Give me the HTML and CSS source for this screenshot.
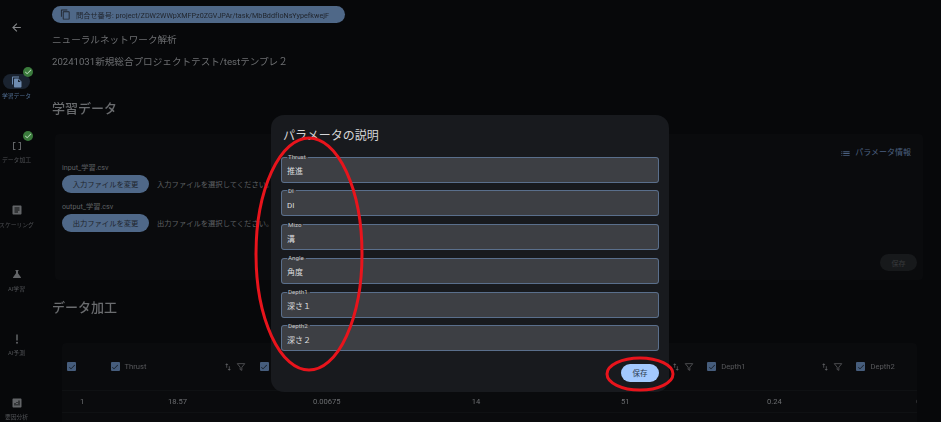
FILE: index.html
```html
<!DOCTYPE html>
<html lang="ja">
<head>
<meta charset="utf-8">
<title>ニューラルネットワーク解析</title>
<link rel="stylesheet" href="styles.css">
</head>
<body>
<svg class="defs" aria-hidden="true">
  <symbol id="i-copy" viewBox="0 0 24 24"><path d="M16 1H4c-1.1 0-2 .9-2 2v14h2V3h12V1zm3 4H8c-1.1 0-2 .9-2 2v14c0 1.1.9 2 2 2h11c1.1 0 2-.9 2-2V7c0-1.1-.9-2-2-2zm0 16H8V7h11v14z"/></symbol>
  <symbol id="i-back" viewBox="0 0 24 24"><path d="M20 11H7.83l5.59-5.59L12 4l-8 8 8 8 1.41-1.41L7.83 13H20v-2z"/></symbol>
  <symbol id="i-files" viewBox="0 0 24 24"><path d="M16 1H4c-1.1 0-2 .9-2 2v14h2V3h12V1zm-1 4 6 6v10c0 1.1-.9 2-2 2H7.99C6.89 23 6 22.1 6 21l.01-14c0-1.1.89-2 1.99-2h7zm-1 7h5.5L14 6.5V12z"/></symbol>
  <symbol id="i-array" viewBox="0 0 24 24"><path d="M15 4v2h3v12h-3v2h5V4zM4 20h5v-2H6V6h3V4H4z"/></symbol>
  <symbol id="i-article" viewBox="0 0 24 24"><path d="M19 3H5c-1.1 0-2 .9-2 2v14c0 1.1.9 2 2 2h14c1.1 0 2-.9 2-2V5c0-1.1-.9-2-2-2zm-5 14H7v-2h7v2zm3-4H7v-2h10v2zm0-4H7V7h10v2z"/></symbol>
  <symbol id="i-flask" viewBox="0 0 24 24"><path d="M19.8 18.4 14 10.67V6.5l1.35-1.69c.26-.33.03-.81-.39-.81H9.04c-.42 0-.65.48-.39.81L10 6.5v4.17L4.2 18.4c-.49.66-.02 1.6.8 1.6h14c.82 0 1.29-.94.8-1.6z"/></symbol>
  <symbol id="i-bang" viewBox="0 0 24 24"><path d="M10.5 3h3v12h-3z"/><circle cx="12" cy="19.5" r="2"/></symbol>
  <symbol id="i-chart" viewBox="0 0 24 24"><path d="M19 3H5c-1.1 0-2 .9-2 2v14c0 1.1.9 2 2 2h14c1.1 0 2-.9 2-2V5c0-1.1-.9-2-2-2zM9 17H7v-5h2v5zm4 0h-2v-3h2v3zm0-5h-2v-2h2v2zm4 5h-2V7h2v10z"/></symbol>
  <symbol id="i-list" viewBox="0 0 24 24"><path d="M3 13h2v-2H3v2zm0 4h2v-2H3v2zm0-8h2V7H3v2zm4 4h14v-2H7v2zm0 4h14v-2H7v2zM7 7v2h14V7H7z"/></symbol>
  <symbol id="i-check" viewBox="0 0 24 24"><path d="M9 16.17 4.83 12l-1.41 1.41L9 19 21 7l-1.41-1.41z"/></symbol>
  <symbol id="i-sort" viewBox="0 0 24 24"><path d="M16 17.01V10h-2v7.01h-3L15 21l4-3.99h-3zM9 3 5 6.99h3V14h2V6.99h3L9 3z"/></symbol>
  <symbol id="i-filter" viewBox="0 0 24 24"><path d="M3 4h18l-7 8.5V20l-4-2v-5.500z" fill="none" stroke="currentColor" stroke-width="2" stroke-linejoin="round"/></symbol>
</svg>

<div class="app">
  <nav class="rail">
    <svg class="rail-back"><use href="#i-back"/></svg>
    <div class="rail-items">
      <div class="rail-item is-active">
        <span class="rail-icon"><svg><use href="#i-files"/></svg><svg class="done" viewBox="0 0 24 24"><circle cx="12" cy="12" r="12"/><path d="M10 16.200 6.300 12.500l-1.400 1.400 5.100 5.100 10-10-1.400-1.400z" transform="translate(0 -1.500)"/></svg></span>
        <span class="rail-label">学習データ</span>
      </div>
      <div class="rail-item">
        <span class="rail-icon"><svg><use href="#i-array"/></svg><svg class="done" viewBox="0 0 24 24"><circle cx="12" cy="12" r="12"/><path d="M10 16.200 6.300 12.500l-1.400 1.400 5.100 5.100 10-10-1.400-1.400z" transform="translate(0 -1.500)"/></svg></span>
        <span class="rail-label">データ加工</span>
      </div>
      <div class="rail-item">
        <span class="rail-icon"><svg><use href="#i-article"/></svg></span>
        <span class="rail-label">スケーリング</span>
      </div>
      <div class="rail-item">
        <span class="rail-icon"><svg><use href="#i-flask"/></svg></span>
        <span class="rail-label">AI学習</span>
      </div>
      <div class="rail-item">
        <span class="rail-icon"><svg><use href="#i-bang"/></svg></span>
        <span class="rail-label">AI予測</span>
      </div>
      <div class="rail-item">
        <span class="rail-icon"><svg><use href="#i-chart"/></svg></span>
        <span class="rail-label">要因分析</span>
      </div>
    </div>
  </nav>

  <main class="main">
    <div class="ticket">
      <svg><use href="#i-copy"/></svg>
      <span>問合せ番号: project/ZDW2WWpXMFPz0ZGVJPAr/task/MbBddfIoNsYypefkwejF</span>
    </div>
    <p class="crumb crumb-first">ニューラルネットワーク解析</p>
    <p class="crumb crumb-second">20241031新規総合プロジェクトテスト/testテンプレ２</p>

    <h2 class="section-title title-data">学習データ</h2>
    <section class="card upload">
      <div class="param-link"><svg><use href="#i-list"/></svg><span>パラメータ情報</span></div>
      <div class="file-label file-label-first">input_学習.csv</div>
      <div class="file-row">
        <span class="file-btn">入力ファイルを変更</span>
        <span class="file-hint">入力ファイルを選択してください。</span>
      </div>
      <div class="file-label">output_学習.csv</div>
      <div class="file-row">
        <span class="file-btn">出力ファイルを変更</span>
        <span class="file-hint">出力ファイルを選択してください。</span>
      </div>
      <div class="upload-foot"><span class="save-disabled">保存</span></div>
    </section>

    <h2 class="section-title title-process">データ加工</h2>
    <section class="card table">
      <div class="thead">
        <div class="cell-index"><span class="box"><svg><use href="#i-check"/></svg></span></div>
        <div class="th"><span class="box"><svg><use href="#i-check"/></svg></span><span class="th-name">Thrust</span><span class="th-tools"><svg><use href="#i-sort"/></svg><svg><use href="#i-filter"/></svg></span></div>
        <div class="th"><span class="box"><svg><use href="#i-check"/></svg></span><span class="th-name">DI</span><span class="th-tools"><svg><use href="#i-sort"/></svg><svg><use href="#i-filter"/></svg></span></div>
        <div class="th"><span class="box"><svg><use href="#i-check"/></svg></span><span class="th-name">Mizo</span><span class="th-tools"><svg><use href="#i-sort"/></svg><svg><use href="#i-filter"/></svg></span></div>
        <div class="th"><span class="box"><svg><use href="#i-check"/></svg></span><span class="th-name">Angle</span><span class="th-tools"><svg><use href="#i-sort"/></svg><svg><use href="#i-filter"/></svg></span></div>
        <div class="th"><span class="box"><svg><use href="#i-check"/></svg></span><span class="th-name">Depth1</span><span class="th-tools"><svg><use href="#i-sort"/></svg><svg><use href="#i-filter"/></svg></span></div>
        <div class="th"><span class="box"><svg><use href="#i-check"/></svg></span><span class="th-name">Depth2</span></div>
      </div>
      <div class="tbody">
        <div class="cell-index">1</div>
        <div>18.57</div>
        <div>0.00675</div>
        <div>14</div>
        <div>51</div>
        <div>0.24</div>
        <div>0.18</div>
      </div>
    </section>
  </main>

  <div class="dialog" role="dialog">
    <h3 class="dialog-title">パラメータの説明</h3>
    <div class="fields">
      <fieldset class="field"><legend>Thrust</legend><div>推進</div></fieldset>
      <fieldset class="field"><legend>DI</legend><div>DI</div></fieldset>
      <fieldset class="field"><legend>Mizo</legend><div>溝</div></fieldset>
      <fieldset class="field"><legend>Angle</legend><div>角度</div></fieldset>
      <fieldset class="field"><legend>Depth1</legend><div>深さ１</div></fieldset>
      <fieldset class="field"><legend>Depth2</legend><div>深さ２</div></fieldset>
    </div>
    <div class="dialog-foot"><span class="save">保存</span></div>
  </div>

  <svg class="marks" viewBox="0 0 941 422" aria-hidden="true">
    <ellipse cx="309" cy="254" rx="53" ry="116"/>
    <ellipse cx="640" cy="374" rx="33" ry="16"/>
  </svg>
</div>
</body>
</html>
```

FILE: styles.css
```css
* { box-sizing: border-box; }

html, body {
  margin: 0;
  height: 100%;
  background: #07080a;
}

body {
  font-family: Roboto, "Noto Sans CJK JP", sans-serif;
  overflow: hidden;
}

.defs { display: none; }

svg { fill: currentColor; }

.app {
  position: relative;
  display: flex;
  width: 941px;
  height: 422px;
  overflow: hidden;
  filter: blur(0.4px);
}

/* side rail */
.rail {
  flex: 0 0 33px;
  display: flex;
  flex-direction: column;
  align-items: center;
  color: #626467;
}

.rail-back {
  flex: none;
  width: 13px;
  height: 13px;
  margin-top: 21px;
  color: #85878a;
}

.rail-items {
  display: flex;
  flex-direction: column;
  margin-top: 34px;
}

.rail-item {
  display: flex;
  flex-direction: column;
  align-items: center;
  width: 33px;
  height: 64.3px;
}

.rail-icon {
  position: relative;
  display: flex;
  align-items: center;
  justify-content: center;
  width: 27px;
  height: 15px;
  margin-top: 6px;
  border-radius: 8px;
}

.rail-icon > svg:first-child {
  width: 12px;
  height: 12px;
}

.is-active .rail-icon {
  background: #1a2330;
  color: #6f8cb0;
}

.done {
  position: absolute;
  top: -7px;
  right: -3px;
  width: 10px;
  height: 10px;
  fill: #3a7a3c;
}

.done path { fill: #b9d8ba; }

.rail-label {
  margin-top: 3px;
  font-size: 5.8px;
  line-height: 9px;
  white-space: nowrap;
  color: #4f5155;
}

.is-active .rail-label { color: #4f6c90; }

/* main column */
.main {
  flex: 1;
  min-width: 0;
  padding: 6px 16px 0 19px;
}

.ticket {
  display: flex;
  align-items: center;
  gap: 5px;
  width: 293px;
  height: 17px;
  padding-left: 8px;
  border-radius: 9px;
  background: #4f6888;
  color: #20252d;
}

.ticket svg {
  width: 11px;
  height: 11px;
  flex: none;
}

.ticket span {
  font-size: 7.2px;
  white-space: nowrap;
}

.crumb {
  margin: 0;
  font-size: 9.6px;
  line-height: 14px;
  color: #6c6e71;
  white-space: nowrap;
}

.crumb-first { margin-top: 10px; }
.crumb-second { margin-top: 8px; }

.section-title {
  margin: 0;
  font-size: 13px;
  font-weight: 500;
  line-height: 18px;
  color: #6a6c6f;
}

.title-data { margin-top: 31px; }
.title-process { margin-top: 19px; }

.card {
  background: #0a0b0d;
  border-radius: 4px;
}

.upload {
  position: relative;
  height: 146px;
  margin: 16px 2px 0 3px;
  padding: 29px 0 0 7px;
}

.param-link {
  position: absolute;
  top: 13px;
  right: 12px;
  display: flex;
  align-items: center;
  gap: 4px;
  font-size: 8px;
  line-height: 12px;
  color: #4a6080;
}

.param-link svg {
  width: 11px;
  height: 11px;
}

.file-label {
  margin-top: 9.5px;
  font-size: 7.2px;
  line-height: 10px;
  color: #5e6063;
}

.file-label-first { margin-top: 0; }

.file-row {
  display: flex;
  align-items: center;
  gap: 8px;
  margin-top: 1.5px;
}

.file-btn {
  display: flex;
  align-items: center;
  justify-content: center;
  width: 87px;
  height: 18px;
  border-radius: 9px;
  background: #4f6888;
  font-size: 7.3px;
  color: #20252d;
}

.file-hint {
  font-size: 7.3px;
  color: #5e6063;
  white-space: nowrap;
}

.upload-foot {
  position: absolute;
  right: 6px;
  top: 120px;
}

.save-disabled {
  display: flex;
  align-items: center;
  justify-content: center;
  width: 37px;
  height: 17px;
  border-radius: 9px;
  background: #17191b;
  font-size: 7px;
  color: #37393b;
}

.table {
  height: 90px;
  margin: 26px 8px 0 10px;
  overflow: hidden;
}

.thead,
.tbody {
  display: grid;
  grid-template-columns: 45px repeat(6, 149.2px);
  width: 941px;
  font-size: 7.6px;
  color: #58595c;
}

.thead {
  height: 48px;
  align-items: center;
  border-bottom: 1px solid #0f1113;
}

.tbody {
  height: 22px;
  align-items: center;
  text-align: center;
  border-bottom: 1px solid #0f1113;
  color: #6c6e71;
}

.tbody > div { padding-right: 8px; }

.tbody .cell-index {
  text-align: left;
  padding: 0 0 0 18px;
}

.thead .cell-index { padding-left: 5px; }

.th {
  display: flex;
  align-items: center;
  padding-left: 3.5px;
}

.th-name {
  flex: 1;
  margin-left: 5px;
}

.th-tools {
  display: flex;
  align-items: center;
  gap: 3px;
  margin-right: 10px;
  color: #58595c;
}

.th-tools svg {
  width: 10px;
  height: 10px;
}

.box {
  display: flex;
  align-items: center;
  justify-content: center;
  width: 9px;
  height: 9px;
  border-radius: 1px;
  background: #465d7c;
  color: #10141a;
}

.box svg {
  width: 8px;
  height: 8px;
}

/* dialog */
.dialog {
  position: absolute;
  left: 271px;
  top: 115px;
  width: 398px;
  height: 277px;
  padding: 12px 10px 0;
  border-radius: 13px;
  background: #181a1e;
}

.dialog-title {
  margin: 0 0 0 2px;
  font-size: 12px;
  font-weight: 400;
  line-height: 18px;
  color: #d4d5d7;
}

.fields {
  display: flex;
  flex-direction: column;
  gap: 5.3px;
  margin-top: 9px;
}

.field {
  height: 28.5px;
  min-width: 0;
  margin: 0;
  padding: 0 5px;
  border: 1px solid #5a6f8c;
  border-radius: 3px;
  background: #3d3f44;
  font-size: 8px;
  line-height: 23px;
  color: #dcdddf;
}

.field legend {
  padding: 0 2px 0 1px;
  font-size: 6.2px;
  line-height: 6px;
  color: #c4c5c7;
}

.dialog-foot {
  display: flex;
  justify-content: flex-end;
  margin-top: 12.5px;
}

.save {
  display: flex;
  align-items: center;
  justify-content: center;
  width: 38px;
  height: 18px;
  border-radius: 9px;
  background: #a3c9ff;
  font-size: 7.5px;
  color: #2c3a4e;
}

.marks {
  position: absolute;
  inset: 0;
  width: 941px;
  height: 422px;
  fill: none;
  stroke: #e8141c;
  stroke-width: 3;
  pointer-events: none;
}
```
